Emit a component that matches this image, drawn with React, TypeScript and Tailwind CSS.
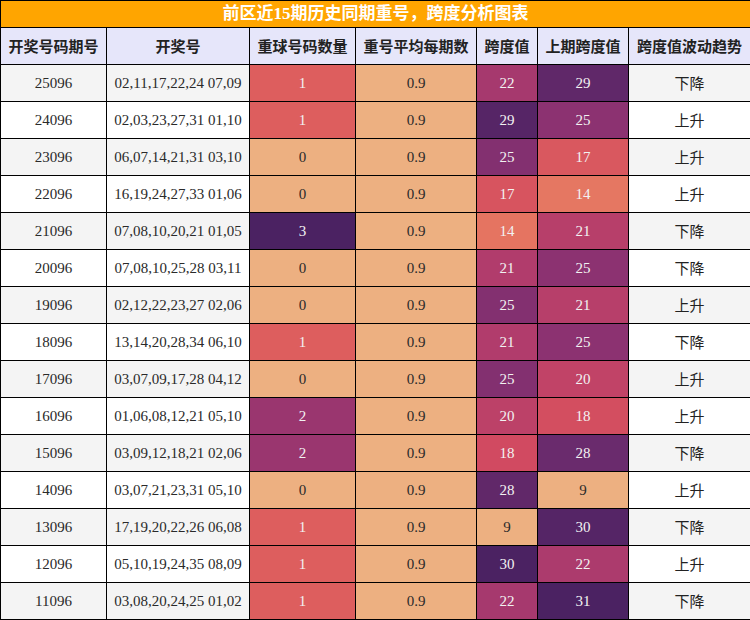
import React from "react";

type Row = [string, string, number, number, number, number, string];

const rows: Row[] = [
  ["25096", "02,11,17,22,24 07,09", 1, 0.9, 22, 29, "下降"],
  ["24096", "02,03,23,27,31 01,10", 1, 0.9, 29, 25, "上升"],
  ["23096", "06,07,14,21,31 03,10", 0, 0.9, 25, 17, "上升"],
  ["22096", "16,19,24,27,33 01,06", 0, 0.9, 17, 14, "上升"],
  ["21096", "07,08,10,20,21 01,05", 3, 0.9, 14, 21, "下降"],
  ["20096", "07,08,10,25,28 03,11", 0, 0.9, 21, 25, "下降"],
  ["19096", "02,12,22,23,27 02,06", 0, 0.9, 25, 21, "上升"],
  ["18096", "13,14,20,28,34 06,10", 1, 0.9, 21, 25, "下降"],
  ["17096", "03,07,09,17,28 04,12", 0, 0.9, 25, 20, "上升"],
  ["16096", "01,06,08,12,21 05,10", 2, 0.9, 20, 18, "上升"],
  ["15096", "03,09,12,18,21 02,06", 2, 0.9, 18, 28, "下降"],
  ["14096", "03,07,21,23,31 05,10", 0, 0.9, 28, 9, "上升"],
  ["13096", "17,19,20,22,26 06,08", 1, 0.9, 9, 30, "下降"],
  ["12096", "05,10,19,24,35 08,09", 1, 0.9, 30, 22, "上升"],
  ["11096", "03,08,20,24,25 01,02", 1, 0.9, 22, 31, "下降"],
];

const stops: [number, string][] = [
  [0, "#edb081"],
  [1 / 7, "#e98d6b"],
  [2 / 7, "#e3685c"],
  [3 / 7, "#d14a61"],
  [4 / 7, "#b13c6c"],
  [5 / 7, "#8f3371"],
  [6 / 7, "#6c2b6d"],
  [1, "#4b2262"],
];

function hex(h: string): number[] {
  return [1, 3, 5].map((i) => parseInt(h.slice(i, i + 2), 16));
}

function cmap(t: number): string {
  const c = Math.max(0, Math.min(1, t));
  for (let i = 0; i < stops.length - 1; i++) {
    const [a, ca] = stops[i];
    const [b, cb] = stops[i + 1];
    if (c >= a && c <= b) {
      const f = (c - a) / (b - a);
      const A = hex(ca);
      const B = hex(cb);
      const m = A.map((v, k) => Math.round(v + (B[k] - v) * f));
      return `rgb(${m[0]},${m[1]},${m[2]})`;
    }
  }
  return stops[stops.length - 1][1];
}

function Heat({ v, min, max, label }: { v: number; min: number; max: number; label: string }) {
  const t = max === min ? 0 : (v - min) / (max - min);
  const light = t > 0.12;
  return (
    <td
      className={`border border-black p-0 text-center ${light ? "text-[#f2f2f2]" : "text-[#2a2a2a]"}`}
      style={{ backgroundColor: cmap(t) }}
    >
      {label}
    </td>
  );
}

export default function App() {
  const headers = ["开奖号码期号", "开奖号", "重球号码数量", "重号平均每期数", "跨度值", "上期跨度值", "跨度值波动趋势"];
  return (
    <div className="w-[750px] h-[620px] bg-white overflow-hidden font-['Liberation_Serif','Noto_Sans_CJK_SC',serif]">
      <table className="w-[750px] table-fixed border-collapse">
        <colgroup>
          <col className="w-[106px]" />
          <col className="w-[143px]" />
          <col className="w-[106px]" />
          <col className="w-[121px]" />
          <col className="w-[61px]" />
          <col className="w-[91px]" />
          <col className="w-[122px]" />
        </colgroup>
        <thead>
          <tr className="h-[27px]">
            <th
              colSpan={7}
              className="border border-black bg-[#ffa500] p-0 text-center text-[17px] font-bold leading-[24px] text-white"
            >
              前区近15期历史同期重号，跨度分析图表
            </th>
          </tr>
          <tr className="h-[37px]">
            {headers.map((h) => (
              <th
                key={h}
                className="border border-black bg-[#e6e6fa] p-0 text-center text-[15px] font-bold text-[#222] font-['Noto_Sans_CJK_SC',sans-serif]"
              >
                {h}
              </th>
            ))}
          </tr>
        </thead>
        <tbody className="text-[15px]">
          {rows.map((r, i) => (
            <tr key={r[0]} className={`h-[37px] ${i % 2 === 0 ? "bg-[#f4f4f4]" : "bg-white"}`}>
              <td className="border border-black p-0 text-center text-[#2a2a2a]">{r[0]}</td>
              <td className="border border-black p-0 text-center text-[#2a2a2a]">{r[1]}</td>
              <Heat v={r[2]} min={0} max={3} label={String(r[2])} />
              <Heat v={r[3]} min={0.9} max={0.9} label={String(r[3])} />
              <Heat v={r[4]} min={9} max={30} label={String(r[4])} />
              <Heat v={r[5]} min={9} max={31} label={String(r[5])} />
              <td className="border border-black p-0 text-center text-[#222] font-['Noto_Sans_CJK_SC',sans-serif]">
                {r[6]}
              </td>
            </tr>
          ))}
        </tbody>
      </table>
    </div>
  );
}
